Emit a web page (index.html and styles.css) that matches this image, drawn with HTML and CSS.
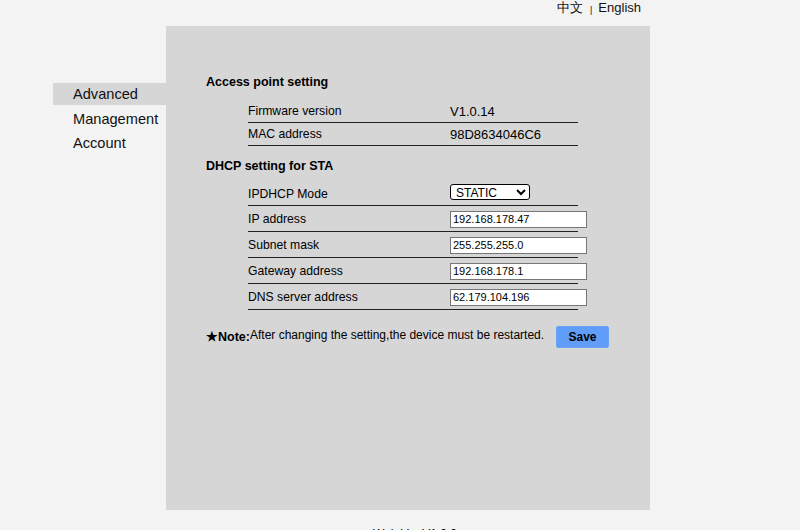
FILE: index.html
```html
<!DOCTYPE html>
<html>
<head>
<meta charset="utf-8">
<title>Settings</title>
<link rel="stylesheet" href="styles.css">
</head>
<body>
<div class="topbar">
  <span class="lang">中文</span><span class="sep">|</span><span class="lang">English</span>
</div>
<div class="main">
  <ul class="menu">
    <li class="menu-item active">Advanced</li>
    <li class="menu-item">Management</li>
    <li class="menu-item">Account</li>
  </ul>
  <div class="panel">
    <h3 class="section-title">Access point setting</h3>
    <table class="grid info">
      <tr><td class="label">Firmware version</td><td class="value">V1.0.14</td></tr>
      <tr><td class="label">MAC address</td><td class="value">98D8634046C6</td></tr>
    </table>
    <h3 class="section-title second">DHCP setting for STA</h3>
    <table class="grid form">
      <tr class="first"><td class="label">IPDHCP Mode</td><td class="value"><select class="mode"><option>STATIC</option><option>DHCP</option></select></td></tr>
      <tr><td class="label">IP address</td><td class="value"><input class="field" type="text" value="192.168.178.47"></td></tr>
      <tr><td class="label">Subnet mask</td><td class="value"><input class="field" type="text" value="255.255.255.0"></td></tr>
      <tr><td class="label">Gateway address</td><td class="value"><input class="field" type="text" value="192.168.178.1"></td></tr>
      <tr><td class="label">DNS server address</td><td class="value"><input class="field" type="text" value="62.179.104.196"></td></tr>
    </table>
    <div class="note-row">
      <p class="note"><b class="note-tag">★Note:</b>After changing the setting,the device must be restarted.</p>
      <button class="save">Save</button>
    </div>
  </div>
</div>
<div class="footer">Web Ver:V1.0.0</div>
</body>
</html>
```
FILE: styles.css
```css
html, body {
  margin: 0;
  padding: 0;
  background: #f3f3f3;
  font-family: "Liberation Sans", Arial, sans-serif;
  color: #000;
  overflow: hidden;
}

.topbar {
  height: 26px;
  display: flex;
  justify-content: flex-end;
  align-items: flex-start;
  padding-right: 159px;
  font-size: 13px;
  line-height: 14px;
  color: #111;
}
.topbar .lang { display: block; padding-top: 1px; }
.topbar .zh { font-size: 13.5px; }
.topbar .sep {
  font-size: 9px;
  margin: 3px 6px 0 7px;
}

.main {
  display: flex;
  height: 484px;
}

.menu {
  list-style: none;
  margin: 0;
  padding: 57px 0 0 53px;
  width: 113px;
}
.menu-item {
  height: 24px;
  line-height: 24px;
  padding-left: 20px;
  font-size: 14.6px;
  color: #111;
  white-space: nowrap;
}
.menu-item.active {
  background: #d6d6d7;
  height: 22px;
  line-height: 22px;
  margin-bottom: 2px;
}

.panel {
  width: 444px;
  background: #d6d6d7;
  padding: 49px 0 0 40px;
}

.section-title {
  margin: 0;
  font-size: 12.5px;
  font-weight: bold;
  line-height: 14px;
}
.section-title.second { margin-top: 13px; }

.grid {
  border-collapse: collapse;
  table-layout: fixed;
  margin-left: 42px;
  width: 330px;
  font-size: 12.2px;
}
.grid td {
  border-bottom: 1px solid #222;
  padding: 0;
  vertical-align: middle;
  white-space: nowrap;
  overflow: visible;
}
.grid .label { width: 202px; }
.info { margin-top: 11px; }
.info td { height: 22px; }
.info .value { font-size: 13px; }
.form { margin-top: 9px; }
.form td { height: 25px; }
.form .first td { height: 23px; }

.mode {
  font-family: "Liberation Sans", Arial, sans-serif;
  font-size: 12px;
  width: 80px;
  height: 16px;
  padding: 0 0 0 1px;
  border: 1px solid #000;
  border-radius: 3px;
  background: #fff;
  margin: 0 0 3px 0;
}
.field {
  font-family: "Liberation Sans", Arial, sans-serif;
  font-size: 11px;
  width: 131px;
  height: 13px;
  padding: 1px 2px;
  border: 1px solid #767676;
  background: #fff;
  margin: 2px 0 1px 0;
}

.note-row {
  display: flex;
  align-items: flex-start;
  margin-top: 16px;
}
.note {
  margin: 2px 0 0 0;
  font-size: 12px;
  width: 350px;
  flex: none;
  white-space: nowrap;
}
.note-tag { vertical-align: -2px; font-size: 12.5px; }
.save {
  width: 53px;
  height: 22px;
  background: #5f9df9;
  border: 1px solid #6aa4f8;
  border-radius: 2px;
  font-family: "Liberation Sans", Arial, sans-serif;
  font-weight: bold;
  font-size: 12px;
  color: #000;
  padding: 0;
}

.footer {
  width: 484px;
  margin-left: 173px;
  text-align: center;
  font-size: 12px;
  padding-top: 17px;
}
```
